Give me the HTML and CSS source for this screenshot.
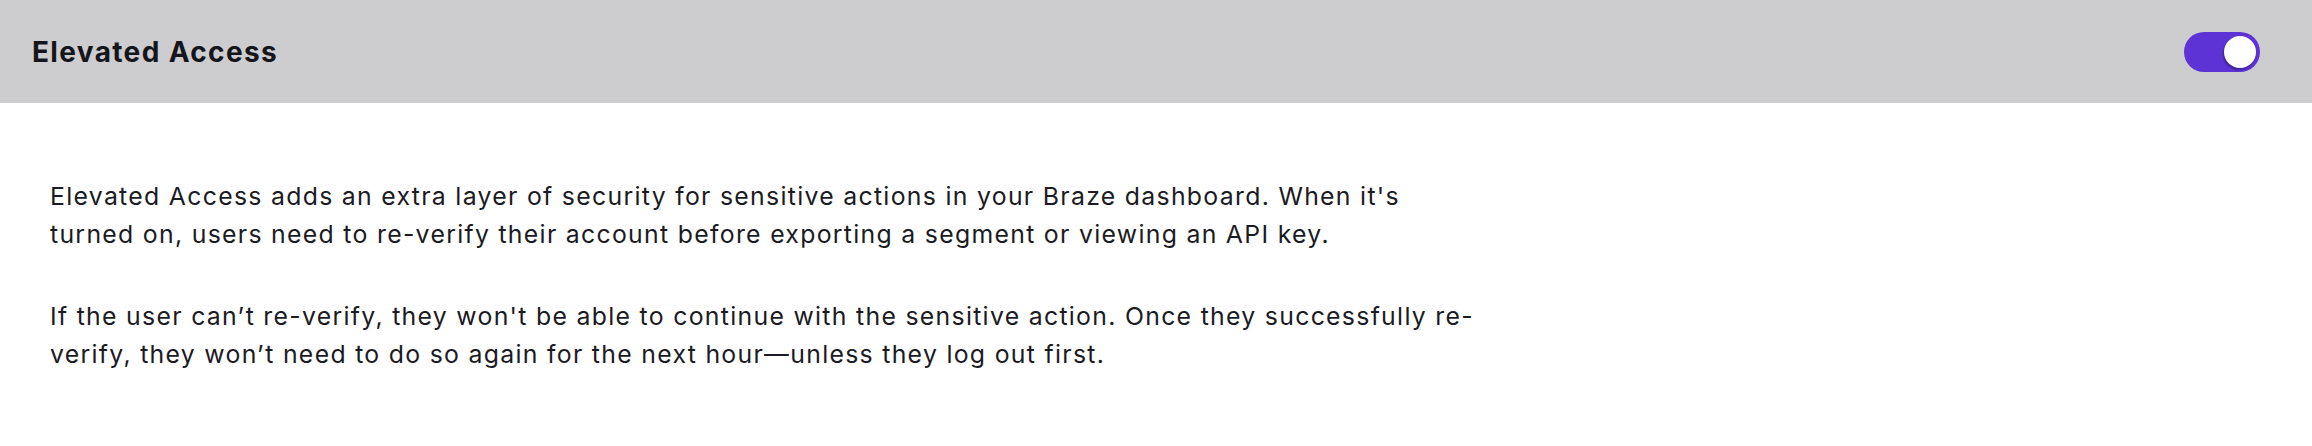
FILE: index.html
```html
<!DOCTYPE html>
<html lang="en">
<head>
<meta charset="utf-8">
<title>Elevated Access</title>
<link rel="stylesheet" href="styles.css">
</head>
<body>
<section class="setting">
  <header class="setting-header">
    <h2 class="setting-title">Elevated Access</h2>
    <label class="toggle">
      <input type="checkbox" class="toggle-input" checked aria-label="Elevated Access">
      <span class="toggle-track"><span class="toggle-knob"></span></span>
    </label>
  </header>
  <div class="setting-body">
    <p>Elevated Access adds an extra layer of security for sensitive actions in your Braze dashboard. When it's turned on, users need to re-verify their account before exporting a segment or viewing an API key.</p>
    <p>If the user can’t re-verify, they won't be able to continue with the sensitive action. Once they successfully re-verify, they won’t need to do so again for the next hour—unless they log out first.</p>
  </div>
</section>
</body>
</html>
```

FILE: styles.css
```css
html, body {
  margin: 0;
  padding: 0;
  background: #ffffff;
}

body {
  font-family: Inter, "Noto Sans", sans-serif;
  color: #1b1b23;
}

.setting-header {
  display: flex;
  align-items: center;
  justify-content: space-between;
  height: 103px;
  padding: 0 52px 0 32px;
  background: #cdcdcf;
  box-sizing: border-box;
}

.setting-title {
  margin: 0;
  font-size: 28px;
  font-weight: 700;
  color: #15151c;
  letter-spacing: 1.35px;
}

.toggle {
  display: flex;
  cursor: pointer;
}

.toggle-input {
  position: absolute;
  opacity: 0;
  width: 0;
  height: 0;
}

.toggle-track {
  display: flex;
  align-items: center;
  justify-content: flex-end;
  width: 76px;
  height: 40px;
  padding: 0 4px;
  box-sizing: border-box;
  border-radius: 20px;
  background: #5d33d6;
}

.toggle-knob {
  width: 32px;
  height: 32px;
  border-radius: 50%;
  background: #ffffff;
  box-shadow: -1px 2px 2px rgba(20, 20, 60, 0.45);
}

.setting-body {
  padding: 74px 0 40px 50px;
  max-width: 1435px;
  font-size: 24.8px;
  line-height: 38px;
  letter-spacing: 1.3px;
}

.setting-body p {
  margin: 0 0 44px;
}

.setting-body p:last-child {
  margin-bottom: 0;
}
```
